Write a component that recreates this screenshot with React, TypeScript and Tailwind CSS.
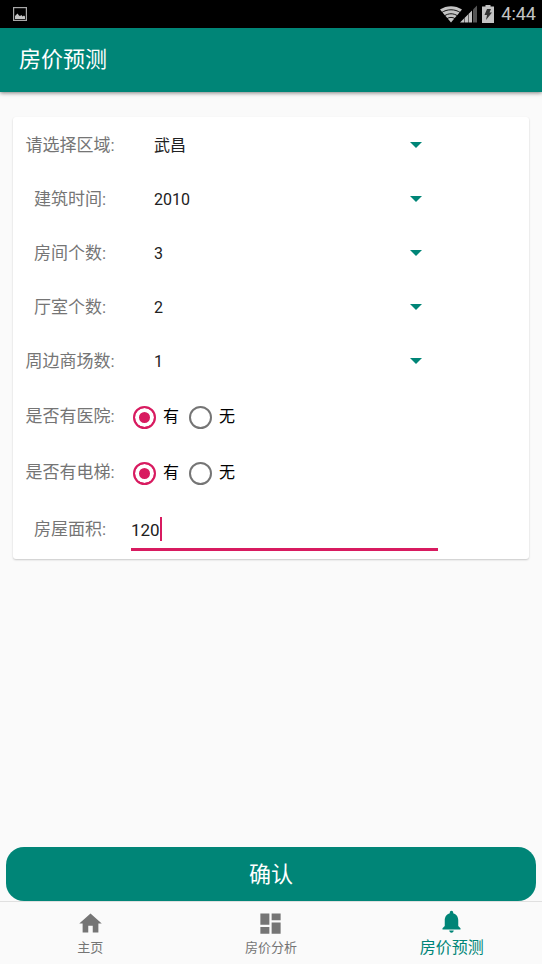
import React, { useState } from "react";
import clsx from "clsx";

interface SelectField {
	id: string;
	label: string;
	value: string;
	options: string[];
}

const selectFields: SelectField[] = [
	{
		id: "area",
		label: "请选择区域",
		value: "武昌",
		options: ["武昌", "汉口", "汉阳", "洪山"],
	},
	{
		id: "year",
		label: "建筑时间",
		value: "2010",
		options: ["2000", "2005", "2010", "2015"],
	},
	{
		id: "rooms",
		label: "房间个数",
		value: "3",
		options: ["1", "2", "3", "4"],
	},
	{ id: "halls", label: "厅室个数", value: "2", options: ["1", "2", "3"] },
	{
		id: "malls",
		label: "周边商场数",
		value: "1",
		options: ["0", "1", "2", "3"],
	},
];

const radioFields = [
	{ id: "hospital", label: "是否有医院" },
	{ id: "elevator", label: "是否有电梯" },
];

const navItems = [
	{
		label: "主页",
		path: "M10 20v-6h4v6h5v-8h3L12 3 2 12h3v8z",
		active: false,
	},
	{
		label: "房价分析",
		path: "M3 13h8V3H3v10zm0 8h8v-6H3v6zm10 0h8V11h-8v10zm0-18v6h8V3h-8z",
		active: false,
	},
	{
		label: "房价预测",
		path: "M12 22c1.1 0 2-.9 2-2h-4c0 1.1.89 2 2 2zm6-6v-5c0-3.07-1.64-5.64-4.5-6.32V4c0-.83-.67-1.5-1.5-1.5s-1.5.67-1.5 1.5v.68C7.63 5.36 6 7.92 6 11v5l-2 2v1h16v-1l-2-2z",
		active: true,
	},
];

const StatusBar = () => (
	<div className="h-7 bg-black flex items-center justify-between pl-[13px] pr-[6px] text-[#c4c4c4]">
		<svg width="14" height="14" viewBox="0 0 14 14" aria-hidden="true">
			<rect
				x="0.6"
				y="0.6"
				width="12.8"
				height="12.8"
				fill="none"
				stroke="#a8a8a8"
				strokeWidth="1.2"
			/>
			<path
				d="M2 12V9L3 8 4.500 6.500 6 8.500 7 9 8.500 8 9.500 9.500 11 8.500 12 9.500V12z"
				fill="currentColor"
			/>
		</svg>
		<div className="flex items-center">
			{/* Wifi and signal share one drawing because they touch */}
			<svg width="38" height="20" viewBox="0 0 38 20" aria-hidden="true">
				<path d="M0 5.500C6.500 1 15.500 1 22 5.500L11 18.500z" fill="currentColor" />
				<path
					d="M1.500 8.700C7 4.800 15 4.800 20.500 8.700M4.500 11.800c4-2.700 9-2.700 13 0M7 14.600c2.500-1.600 5.500-1.600 8 0"
					fill="none"
					stroke="#000"
					strokeWidth="0.9"
				/>
				<path
					d="M20 18.500L24 14.500V18.500zM24.500 14L28 10.500V18.500H24.500zM28.500 10L32 6.500V18.500H28.500z"
					fill="currentColor"
				/>
				<path d="M33 5.500L37 1.500V18.500H33z" fill="#555" />
			</svg>
			<svg
				width="12"
				height="20"
				viewBox="0 0 12 20"
				className="ml-1"
				aria-hidden="true"
			>
				<path d="M3.500 1h5v1.500H12V19H0V2.500h3.500z" fill="currentColor" />
				<path d="M5 5h4L7.500 8.500H10L4 16l1-5H2.500z" fill="#333" />
			</svg>
			<span className="ml-[7px] text-lg leading-7">4:44</span>
		</div>
	</div>
);

interface FieldRowProps {
	label: string;
	htmlFor?: string;
	className: string;
	children: React.ReactNode;
}

const FieldRow = ({ label, htmlFor, className, children }: FieldRowProps) => {
	const labelClass =
		"w-[90px] shrink-0 text-center whitespace-nowrap text-[17px] text-[#757575]";
	return (
		<div className={clsx("flex items-center gap-4", className)}>
			{htmlFor ? (
				<label htmlFor={htmlFor} className={labelClass}>
					{label}:
				</label>
			) : (
				<span className={labelClass}>{label}:</span>
			)}
			{children}
		</div>
	);
};

const App = () => {
	const [size, setSize] = useState("120");

	return (
		<div className="min-h-screen flex flex-col bg-[#fafafa] font-[Roboto,'Noto_Sans_CJK_SC',sans-serif]">
			<StatusBar />
			<header className="h-16 bg-[#008577] flex items-center px-[19px] pb-0.5 shadow-[0_1px_4px_rgba(0,0,0,0.5)]">
				<h1 className="text-[22px] text-white">房价预测</h1>
			</header>

			<main className="flex-1 flex flex-col">
				<form
					id="predict-form"
					className="mt-[25px] mx-[13px] pt-0.5 pl-3 pr-[91px] bg-white rounded-[3px] shadow-[0_1px_2px_rgba(0,0,0,0.2)]"
					onSubmit={(e) => e.preventDefault()}
				>
					{/* Spinners */}
					{selectFields.map((field) => (
						<FieldRow
							key={field.id}
							label={field.label}
							htmlFor={field.id}
							className="h-[54px]"
						>
							<div className="flex-1 relative">
								<select
									id={field.id}
									defaultValue={field.value}
									className="w-full h-10 pl-[23px] appearance-none bg-transparent text-base text-[#212121] outline-none"
								>
									{field.options.map((option) => (
										<option key={option}>{option}</option>
									))}
								</select>
								<svg
									width="12"
									height="6"
									viewBox="0 0 12 6"
									className="absolute right-4 top-4 pointer-events-none"
									aria-hidden="true"
								>
									<path d="M0 0h12L6 6z" fill="#008577" />
								</svg>
							</div>
						</FieldRow>
					))}

					{/* Yes / no choices */}
					{radioFields.map((field) => (
						<FieldRow key={field.id} label={field.label} className="h-14">
							<div
								role="radiogroup"
								aria-label={field.label}
								className="flex gap-2.5 pl-0.5"
							>
								{["有", "无"].map((option) => (
									<label
										key={option}
										className="flex items-center gap-[7px] text-base text-black"
									>
										<input
											type="radio"
											name={field.id}
											value={option}
											defaultChecked={option === "有"}
											className="appearance-none size-[23px] rounded-full border-2 border-[#757575] checked:border-[#d81b60] checked:bg-[#d81b60] checked:shadow-[inset_0_0_0_4px_#fff]"
										/>
										{option}
									</label>
								))}
							</div>
						</FieldRow>
					))}

					<FieldRow label="房屋面积" htmlFor="size" className="h-[58px]">
						<div className="flex-1 relative">
							<input
								id="size"
								type="text"
								value={size}
								onChange={(e) => setSize(e.target.value)}
								className="block w-full h-[42px] pt-0.5 border-b-3 border-[#d81b60] bg-transparent text-[17px] text-[#212121] caret-[#d81b60] outline-none"
							/>
							<span className="absolute left-[29px] top-2 w-0.5 h-6 bg-[#d81b60]" />
						</div>
					</FieldRow>
				</form>

				<button
					type="submit"
					form="predict-form"
					className="mt-auto mx-1.5 h-[54px] rounded-[18px] bg-[#008577] text-[22px] text-white"
				>
					确认
				</button>
			</main>

			<nav className="h-[63px] border-t border-[#e0e0e0] grid grid-cols-3">
				{navItems.map((item) => (
					<a
						key={item.label}
						href="#"
						aria-current={item.active ? "page" : undefined}
						className={clsx(
							"flex flex-col items-center gap-px",
							item.active
								? "pt-1.5 text-base leading-6 text-[#008577]"
								: "pt-2 text-[13px] leading-5 text-[#757575]"
						)}
					>
						<svg
							width="27"
							height="27"
							viewBox="0 0 24 24"
							fill="currentColor"
							aria-hidden="true"
						>
							<path d={item.path} />
						</svg>
						{item.label}
					</a>
				))}
			</nav>
		</div>
	);
};

export default App;
